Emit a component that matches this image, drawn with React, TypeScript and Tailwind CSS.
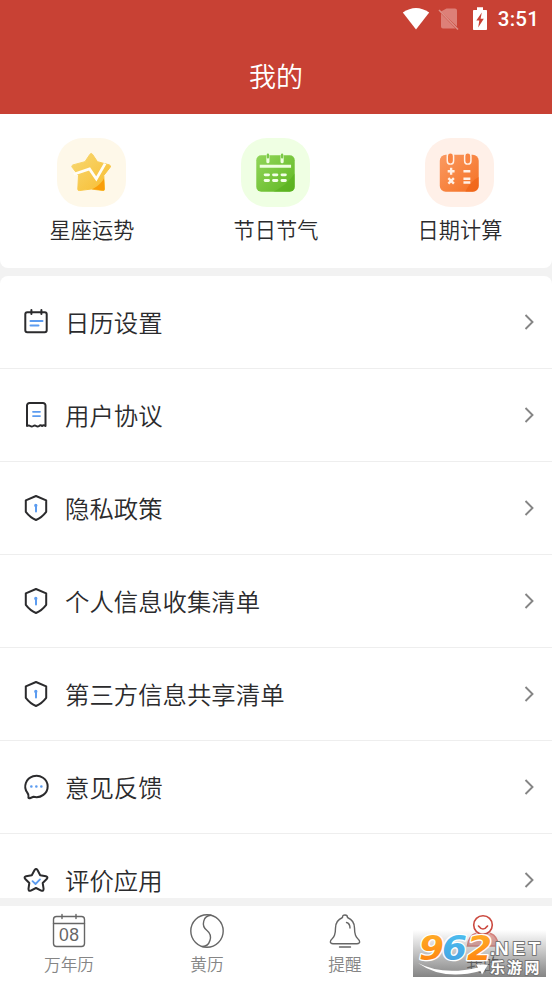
import React from "react";

interface Shortcut {
  label: string;
  tile: string;
  icon: React.ReactNode;
}

interface MenuItem {
  label: string;
  icon: React.ReactNode;
}

const INK = "#2b2b2d";
const BLUE = "#5c9cf0";

const STAR_PATH =
  "M33.400 16.500q1.300-1.800 2.600 0l5 7.500 12.200 3.300q1.800.8.800 2.300l-6.500 8.400.7 14q0 1.500-1.700 1.300L34.700 51.800 22.800 53.300q-1.700.2-1.700-1.300l.7-14-6.500-8.400q-1-1.500.8-2.300l12.300-3.300z";

const StarTileIcon = () => (
  <svg viewBox="0 0 70 70" className="size-full">
    <defs>
      <linearGradient id="star" x1="0" y1="0" x2="1" y2="1">
        <stop offset="0" stopColor="#f7d873" />
        <stop offset="1" stopColor="#f8bd30" />
      </linearGradient>
      <clipPath id="starClip">
        <path d={STAR_PATH} />
      </clipPath>
    </defs>
    <path d={STAR_PATH} fill="url(#star)" stroke="url(#star)" strokeWidth="1" strokeLinejoin="round" />
    <path d="M32 54C40 50 46 46 49 38V54z" fill="#f99e0b" clipPath="url(#starClip)" />
    <path d="M17 36.800 33 31.300l6.900 10.200L48.800 26" fill="none" stroke="#fffdf6" strokeWidth="2.800" />
  </svg>
);

const FestivalTileIcon = () => (
  <svg viewBox="0 0 70 70" className="size-full">
    <defs>
      <linearGradient id="green" x1="0" y1="0" x2="1" y2="1">
        <stop offset="0" stopColor="#92d65a" />
        <stop offset="1" stopColor="#5fb722" />
      </linearGradient>
    </defs>
    <rect x="15.500" y="17.500" width="39" height="37" rx="5" fill="url(#green)" />
    <path d="M33 54.500C42 50 49 44 54.500 36v13.500a5 5 0 0 1-5 5z" fill="#51ab18" opacity=".45" />
    <path d="M27.300 18v6M41.700 18v6" stroke="#efffe0" strokeWidth="3.200" strokeLinecap="round" />
    <path d="M27.300 17v2.500M41.700 17v2.500" stroke="#7cc94a" strokeWidth="2.400" strokeLinecap="round" />
    <path d="M19 28.700h31.800" stroke="#efffe0" strokeWidth="2.900" />
    <path
      d="M24.500 37.400h3.400M33 37.400h3.400M41.600 37.400h3.400M24.500 43.200h3.400M33 43.200h3.400M41.600 43.200h3.400"
      stroke="#f2ffe8"
      strokeWidth="3"
      strokeLinecap="round"
    />
  </svg>
);

const CalcTileIcon = () => (
  <svg viewBox="0 0 70 70" className="size-full">
    <defs>
      <linearGradient id="orange" x1="0" y1="0" x2="1" y2="1">
        <stop offset="0" stopColor="#fa9a62" />
        <stop offset="1" stopColor="#f57022" />
      </linearGradient>
    </defs>
    <rect x="15" y="17" width="39.500" height="37.500" rx="6" fill="url(#orange)" />
    <path d="M41 54.500c3-7 8-12 13.500-15v9a6 6 0 0 1-6 6z" fill="#ec5c0d" opacity=".5" />
    <g fill="#f98442" stroke="#fff0e6" strokeWidth="1.500">
      <rect x="22.600" y="15" width="6.400" height="11.500" rx="3.200" />
      <rect x="40.200" y="15" width="6.400" height="11.500" rx="3.200" />
    </g>
    <path
      d="M23 33.700h7M26.500 30.200v7M39 33.700h7M23.700 40.700l5.600 5.600M29.300 40.700l-5.600 5.600M39 41.300h7M39 45.200h7"
      stroke="#fff0e6"
      strokeWidth="2.400"
    />
  </svg>
);

const RowIcon = ({ children }: { children: React.ReactNode }) => (
  <svg
    viewBox="0 0 28 28"
    className="size-7 shrink-0"
    fill="none"
    stroke={INK}
    strokeWidth="2"
    strokeLinecap="round"
    strokeLinejoin="round"
  >
    {children}
  </svg>
);

const CalendarIcon = () => (
  <RowIcon>
    <rect x="3.300" y="4.200" width="21.400" height="20" rx="2" />
    <path d="M9.400 2v4M19.400 2v4" />
    <path d="M8.500 13h12M8.500 17.400h8" stroke={BLUE} />
  </RowIcon>
);

const DocIcon = () => (
  <RowIcon>
    <path d="M5 25V4.500a2.500 2.500 0 0 1 2.500-2.500h13.500a2.500 2.500 0 0 1 2.500 2.500V25q-1.800-1.600-3.400 0-1.500-1.600-3 0-1.500 1-2.900 0-1.400-1-2.900 0-1.600 1-3 0Q6.700 23.800 5 25z" />
    <path d="M11 10.800h7M11 15.100h7" stroke={BLUE} strokeWidth="1.800" />
  </RowIcon>
);

const ShieldIcon = () => (
  <RowIcon>
    <path d="M14 2 24.200 6.300V17.800Q19.500 23.800 14 26 8.500 23.800 3.800 17.800V6.300z" />
    <path d="M14 11.500v6" stroke={BLUE} />
    <circle cx="13.800" cy="11.500" r=".9" stroke={BLUE} fill={BLUE} strokeWidth="1.500" />
  </RowIcon>
);

const MessageIcon = () => (
  <RowIcon>
    <path d="M5.200 19.500A11.200 10.700 0 1 1 11.500 23.800L7.800 25.200Q6 25.600 6.500 23.900 6.900 21.600 5.200 19.500z" />
    <path d="M9.300 13.600h.1M14.300 13.600h.1M19.300 13.600h.1" stroke={BLUE} strokeWidth="2.500" />
  </RowIcon>
);

const RateIcon = () => (
  <RowIcon>
    <path d="M12.600 4q1.500-2 2.900 0l2.700 5.200 5.700 1q2.600.8.800 2.800l-4 4 .9 5.800q0 2.700-2.400 1.800L14 22l-5.200 2.600q-2.400.9-2.300-1.800l.8-5.800-4-4q-1.800-2 .8-2.800l5.700-1z" />
    <path d="m10.500 15.200 3 2.800 4.500-4.600" stroke={BLUE} strokeWidth="1.800" />
  </RowIcon>
);

const shortcuts: Shortcut[] = [
  { label: "星座运势", tile: "bg-[#fef8e9]", icon: <StarTileIcon /> },
  { label: "节日节气", tile: "bg-[#efffe3]", icon: <FestivalTileIcon /> },
  { label: "日期计算", tile: "bg-[#fff0e8]", icon: <CalcTileIcon /> },
];

const menu: MenuItem[] = [
  { label: "日历设置", icon: <CalendarIcon /> },
  { label: "用户协议", icon: <DocIcon /> },
  { label: "隐私政策", icon: <ShieldIcon /> },
  { label: "个人信息收集清单", icon: <ShieldIcon /> },
  { label: "第三方信息共享清单", icon: <ShieldIcon /> },
  { label: "意见反馈", icon: <MessageIcon /> },
  { label: "评价应用", icon: <RateIcon /> },
];

const StatusBar = () => (
  <div className="flex h-[38px] items-center justify-end pr-[13px] text-white">
    <svg viewBox="0 0 28 24" className="mr-[8px] h-6 w-7">
      <path d="M.8 5.500Q14-3.500 27.200 5.500L14 22.500z" fill="#fff" />
    </svg>
    <svg viewBox="0 0 22 24" className="mr-[12px] h-6 w-[22px]">
      <path d="M8.500 1.500H17a2 2 0 0 1 2 2v16L3 4.500zM3 6.500 17.500 21.500H5a2 2 0 0 1-2-2z" fill="#dd8078" />
      <path d="m1 3 19 19.500" stroke="#dd8f87" strokeWidth="1.500" />
    </svg>
    <svg viewBox="0 0 16 24" className="mr-[10px] h-6 w-4">
      <path d="M5 .200h6v2.700h3.200q.8 0 .8.800v18.500q0 .7-.8.700H1.800q-.8 0-.8-.7V3.700q0-.8.800-.8H5z" fill="#fff" />
      <path d="M9.800 5.500 4.300 13.500h3l-1.100 7 5.600-8.700H8.600z" fill="#c94134" />
    </svg>
    <span className="font-[Roboto] text-[20.500px] font-medium leading-none tracking-[0.200px]">3:51</span>
  </div>
);

const NavItem = ({ label, children }: { label: string; children: React.ReactNode }) => (
  <div className="flex flex-1 flex-col items-center pt-[7px]">
    <svg viewBox="0 0 36 36" className="size-9" fill="none" stroke="#666" strokeWidth="1.400" strokeLinecap="round" strokeLinejoin="round">
      {children}
    </svg>
    <span className="mt-[3px] text-[16.700px] leading-6 text-[#858585]">{label}</span>
  </div>
);

const Watermark = () => (
  <div className="absolute bottom-[6px] right-[6px] h-[47px] w-[133px]">
    <div className="absolute inset-0 bg-linear-to-b from-[#777]/0 via-[#777]/45 to-[#777]/90" />
    <svg viewBox="0 0 133 47" className="absolute inset-0 size-full">
      <defs>
        <linearGradient id="hot" x1="0" y1="0" x2="0" y2="1">
          <stop offset="0" stopColor="#ffb22c" />
          <stop offset="1" stopColor="#ff7d0b" />
        </linearGradient>
        <linearGradient id="cool" x1="0" y1="0" x2="0" y2="1">
          <stop offset="0" stopColor="#4cc0f0" />
          <stop offset="1" stopColor="#459fe0" />
        </linearGradient>
      </defs>
      <path d="M5 33Q30 46 65 37.500L63 34.500 75 34.500 69 44.500 67.500 41Q30 51 5 33z" fill="#fff" />
      <g
        fontFamily="DejaVu Sans"
        fontWeight="700"
        fontStyle="italic"
        fontSize="33"
        stroke="#fff"
        strokeWidth="2.600"
        strokeLinejoin="round"
        paintOrder="stroke"
      >
        <text x="6" y="30" textLength="25" lengthAdjust="spacingAndGlyphs" fill="url(#hot)">9</text>
        <text x="29" y="30" textLength="25" lengthAdjust="spacingAndGlyphs" fill="url(#cool)">6</text>
        <text x="54" y="30" textLength="25" lengthAdjust="spacingAndGlyphs" fill="url(#hot)">2</text>
      </g>
      <g fill="#fff" stroke="#747474" strokeWidth="2" strokeLinejoin="round" paintOrder="stroke" fontWeight="700">
        <text x="77 82 99.500 115.500" y="24.500" fontFamily="Liberation Sans" fontSize="19">.NET</text>
        <text x="77 94 111.500" y="42.500" fontFamily="Noto Sans CJK SC" fontSize="15">乐游网</text>
      </g>
    </svg>
  </div>
);

export default function App() {
  return (
    <div
      className="relative flex h-[983px] w-[552px] flex-col overflow-hidden bg-[#f2f2f2] font-['Noto_Sans_CJK_SC',sans-serif] font-[350] text-[#2b2b2d]"
    >
      <header className="h-[114px] shrink-0 bg-[#c84134]">
        <StatusBar />
        <h1 className="text-center text-[27px] font-[350] leading-[75px] text-white">我的</h1>
      </header>

      {/* Shortcuts */}
      <section className="flex h-[154px] shrink-0 rounded-b-lg bg-white pt-6">
        {shortcuts.map((s) => (
          <div key={s.label} className="flex flex-1 flex-col items-center">
            <div className={`mr-px size-[69px] rounded-[26px] ${s.tile}`}>{s.icon}</div>
            <span className="mt-[6px] text-[21.200px] leading-8">{s.label}</span>
          </div>
        ))}
      </section>

      {/* Menu, the last row runs under the tab bar */}
      <section className="mt-2 h-[622px] shrink-0 overflow-hidden rounded-t-lg bg-white">
        {menu.map((m) => (
          <div key={m.label} className="flex h-[93px] items-center border-b border-[#eee] pl-[22px] pr-[17px]">
            {m.icon}
            <span className="ml-[15px] flex-1 pb-px text-[24.400px] leading-9">{m.label}</span>
            <svg viewBox="0 0 12 18" className="h-[18px] w-3" fill="none" stroke="#858585" strokeWidth="1.900">
              <path d="m2.500 2 7 7-7 7" />
            </svg>
          </div>
        ))}
      </section>

      <nav className="mt-2 flex h-[77px] shrink-0 bg-white">
        <NavItem label="万年历">
          <rect x="2.500" y="3.500" width="31" height="30" rx="3" />
          <path d="M2.500 10.500h31M11 1.500v4M25 1.500v4" />
          <text x="8" y="28" fontFamily="Liberation Sans" fontSize="17.500" fill="#666" stroke="none" textLength="20">
            08
          </text>
        </NavItem>
        <NavItem label="黄历">
          <circle cx="18" cy="18" r="16.200" />
          <path d="M22 2.300C14.500 2.500 11.500 12.500 18 17.500S21 34 13 33.500" />
        </NavItem>
        <NavItem label="提醒">
          <path d="M15.500 4.500Q15.500 2 18 2t2.500 2.500Q27.500 7.500 27.500 15C27.500 23 29.500 24 32.300 27.500 33.500 30 31.500 30.700 30 30.700H6C4.500 30.700 2.500 30 3.700 27.500 6.500 24 8.500 23 8.500 15Q8.500 7.500 15.500 4.500M19.500 9.500Q23 10.500 23 15M12.500 34h11" />
        </NavItem>
        <div className="flex flex-1 flex-col items-center pt-[7px]">
          <svg viewBox="0 0 36 36" className="size-9" fill="none" stroke="#cb493f" strokeWidth="1.600" strokeLinecap="round">
            <path d="M10.500 20.500Q3.500 23 2.500 33h31Q32.500 23 25.500 20.500" fill="#e9a7a2" stroke="#dd817b" />
            <circle cx="18" cy="12" r="9.300" fill="#fff" />
            <path d="M13.500 13Q18 19 22.500 13" />
          </svg>
          <span className="mt-[3px] text-[16.700px] leading-6 text-[#222]">我的</span>
        </div>
      </nav>

      <Watermark />
    </div>
  );
}
